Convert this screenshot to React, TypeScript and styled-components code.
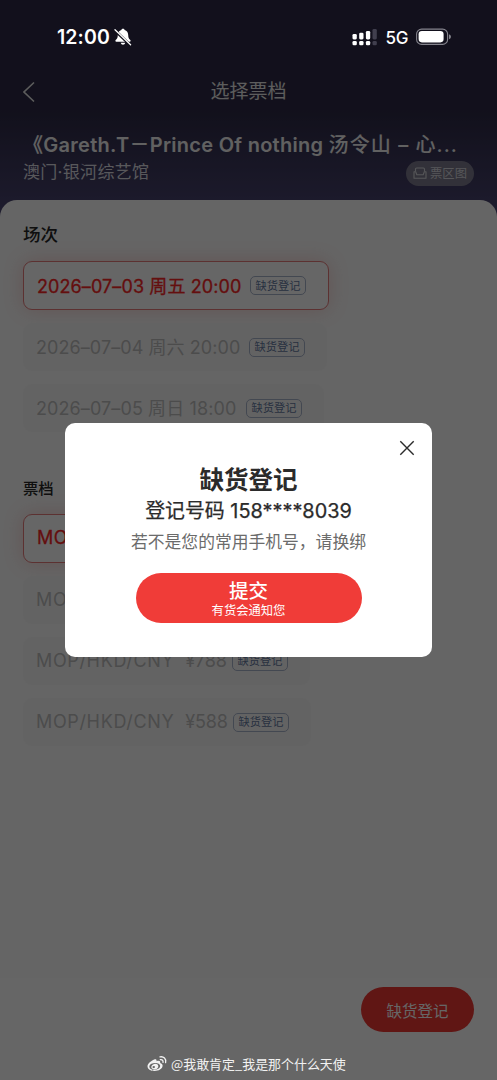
import React from 'react';
import styled, { createGlobalStyle } from 'styled-components';

const Global = createGlobalStyle`
  * { box-sizing: border-box; }
  html, body { margin: 0; padding: 0; }
  body {
    width: 497px;
    height: 1080px;
    overflow: hidden;
    font-family: Inter, 'Noto Sans CJK SC', sans-serif;
  }
  button { font: inherit; border: 0; padding: 0; background: none; }
`;

const Screen = styled.div`
  position: relative;
  width: 497px;
  height: 1080px;
  overflow: hidden;
  display: flex;
  flex-direction: column;
  background: linear-gradient(#2d2a46 0, #2d2a46 110px, #494470 210px);
`;

const Header = styled.header`
  height: 200px;
  flex: none;
  padding: 70px 23px 0;
  color: #fff;
`;

const NavBar = styled.nav`
  display: grid;
  grid-template-columns: 40px 1fr 40px;
  grid-template-rows: 44px;
  align-items: center;
  height: 44px;
  svg { display: block; }
`;

const NavTitle = styled.h1`
  margin: 0;
  text-align: center;
  font-size: 19px;
  font-weight: 400;
  line-height: 46px;
  color: #e8e8e8;
`;

const EventTitle = styled.div`
  margin-top: 16px;
  height: 30px;
  line-height: 30px;
  font-size: 20px;
  font-weight: 600;
  letter-spacing: 0.27px;
  white-space: nowrap;
  color: #f2f2f2;
`;

const TitleTail = styled.span`
  font-weight: 500;
  letter-spacing: 1.05px;
`;

const VenueRow = styled.div`
  display: flex;
  justify-content: space-between;
  height: 26px;
`;

const Venue = styled.span`
  font-size: 17px;
  line-height: 24px;
  letter-spacing: 0.3px;
  color: #dcdce4;
`;

const MapButton = styled.button`
  display: flex;
  align-items: center;
  justify-content: center;
  gap: 3px;
  width: 68px;
  height: 25px;
  margin-top: 1px;
  border-radius: 13px;
  background: #7d7c8e;
  color: #d8d8de;
  font-size: 12.3px;
  line-height: 25px;
`;

const Sheet = styled.main`
  flex: 1;
  display: flex;
  flex-direction: column;
  align-items: flex-start;
  padding: 20px 23px 0;
  border-radius: 17px 17px 0 0;
  background: #fcfcfc;
`;

const SectionTitle = styled.h2<{ $size: number; $weight: number }>`
  margin: 0;
  height: 28px;
  line-height: 29px;
  font-size: ${(p) => p.$size}px;
  font-weight: ${(p) => p.$weight};
  color: #262626;
`;

const Options = styled.div<{ $top: number; $bottom: number }>`
  display: flex;
  flex-direction: column;
  align-items: flex-start;
  gap: 13px;
  margin: ${(p) => p.$top}px 0 ${(p) => p.$bottom}px;
`;

const Option = styled.div<{ $active?: boolean; $width: number }>`
  display: flex;
  align-items: center;
  justify-content: space-between;
  width: ${(p) => p.$width}px;
  height: ${(p) => (p.$active ? 49 : 48)}px;
  padding: 0 22px 0 13px;
  border: ${(p) => (p.$active ? '1px solid #e57c7c' : '0')};
  border-radius: 9px;
  background: ${(p) => (p.$active ? '#fff' : '#f8f8f8')};
  box-shadow: ${(p) => (p.$active ? '0 0 20px rgba(239, 60, 55, .22)' : 'none')};
  color: ${(p) => (p.$active ? '#fb2626' : '#bebebe')};
  font-size: 18px;
  font-weight: 400;
  -webkit-text-stroke: ${(p) => (p.$active ? '0.3px currentColor' : '0')};
  white-space: pre;
`;

const OptionText = styled.span<{ $spacing: number }>`
  margin-top: -2px;
  letter-spacing: ${(p) => p.$spacing}px;
`;

const Price = styled.span`
  letter-spacing: -0.2px;
  margin-left: 11px;
`;

const Tag = styled.span`
  flex: none;
  display: flex;
  align-items: center;
  justify-content: center;
  width: 56px;
  height: 19px;
  border: 1px solid #a9b4cb;
  border-radius: 5px;
  color: #64799f;
  font-size: 11.2px;
  line-height: 18px;
  -webkit-text-stroke: 0;
`;

const Footer = styled.footer`
  flex: none;
  display: flex;
  justify-content: flex-end;
  height: 102px;
  padding: 9px 23px 0;
  background: #fff;
`;

const RegisterButton = styled.button`
  width: 113px;
  height: 45px;
  padding-top: 1px;
  border-radius: 23px;
  background: #ef3732;
  color: #fff;
  font-size: 15.5px;
`;

const Scrim = styled.div`
  position: absolute;
  inset: 0;
  background: rgba(0, 0, 0, 0.6);
`;

const StatusBar = styled.div`
  position: absolute;
  top: 24px;
  left: 57px;
  right: 45px;
  height: 26px;
  display: flex;
  align-items: center;
  color: #fff;
`;

const Clock = styled.span`
  font-size: 19.5px;
  font-weight: 600;
  line-height: 26px;
  letter-spacing: 0.1px;
  margin-right: 4px;
`;

const Network = styled.span`
  font-size: 17px;
  font-weight: 500;
  letter-spacing: -0.4px;
  padding-top: 1px;
  margin: 0 8px 0 9px;
`;

const Spacer = styled.span`
  flex: 1;
`;

const Dialog = styled.section`
  position: absolute;
  left: 65px;
  top: 423px;
  width: 367px;
  height: 234px;
  border-radius: 10px;
  background: #fff;
  display: flex;
  flex-direction: column;
  align-items: center;
  color: #2b2b2b;
`;

const CloseRow = styled.div`
  width: 100%;
  height: 39px;
  flex: none;
  display: flex;
  justify-content: flex-end;
  padding: 17px 17px 0 0;
`;

const DialogTitle = styled.h3`
  margin: 0;
  height: 35px;
  line-height: 36px;
  font-size: 24.5px;
  font-weight: 700;
`;

const PhoneLine = styled.div`
  height: 28px;
  line-height: 28px;
  font-size: 19.9px;
  font-weight: 400;
  -webkit-text-stroke: 0.25px currentColor;
  white-space: nowrap;
`;

const Hint = styled.div`
  height: 32px;
  line-height: 34px;
  font-size: 16.8px;
  color: #6b6b6b;
  white-space: nowrap;
`;

const Submit = styled.button`
  display: flex;
  flex-direction: column;
  align-items: center;
  width: 226px;
  height: 50px;
  margin-top: 16px;
  padding-top: 5px;
  border-radius: 25px;
  background: #f03c38;
  color: #fff;
`;

const SubmitLabel = styled.span`
  font-size: 19.5px;
  font-weight: 500;
  line-height: 26px;
`;

const SubmitNote = styled.span`
  font-size: 12.3px;
  line-height: 14px;
`;

const Watermark = styled.div`
  position: absolute;
  left: 147px;
  top: 1054px;
  height: 20px;
  display: flex;
  align-items: center;
  gap: 4px;
  color: #f2f2f2;
  font-size: 12.95px;
  line-height: 20px;
  white-space: nowrap;
  font-family: 'Noto Sans CJK SC', sans-serif;
`;

type Item = { text: string; price?: string; width: number; spacing: number; active?: boolean };

const sessions: Item[] = [
  { text: '2026–07–03 周五 20:00', width: 306, spacing: 0.1, active: true },
  { text: '2026–07–04 周六 20:00', width: 304, spacing: 0.07 },
  { text: '2026–07–05 周日 18:00', width: 301, spacing: 0.1 },
];

const tickets: Item[] = [
  { text: 'MOP/HKD/CNY', price: '¥1288', width: 306, spacing: 0.5, active: true },
  { text: 'MOP/HKD/CNY', price: '¥988', width: 287, spacing: 0.65 },
  { text: 'MOP/HKD/CNY', price: '¥788', width: 287, spacing: 0.65 },
  { text: 'MOP/HKD/CNY', price: '¥588', width: 288, spacing: 0.65 },
];

const BackIcon = () => (
  <svg width="14" height="22" viewBox="0 0 14 22" fill="none" stroke="#e6e6e6" strokeWidth="1.6">
    <path d="M11 1.5 1 11l10 9.5" />
  </svg>
);

const SeatIcon = () => (
  <svg width="14" height="13" viewBox="0 0 14 13" fill="none" stroke="currentColor" strokeWidth="1.1">
    <path d="M2.500 4.500V2.200Q2.500 1 3.700 1h6.600q1.200 0 1.200 1.200v2.300" />
    <path d="M1 4.800h1.700l1.100 2.900h6.400l1.100-2.900H13v6.500H1z" strokeLinejoin="round" />
  </svg>
);

const BellOff = () => (
  <svg width="18" height="18" viewBox="0 0 18 18">
    <path d="M9 .8c-.9 0-1.500.5-1.600 1.200C5 2.700 3.900 4.500 3.800 7 3.700 9.600 3.300 10.700 1.700 12.100c-.6.6-.4 1.600.6 1.600h13.400c1 0 1.200-1 .6-1.600-1.600-1.400-2-2.500-2.100-5.100-.1-2.500-1.200-4.300-3.600-5C10.500 1.300 9.900.8 9 .8zM6.700 14.800c.3 1.200 1.200 1.900 2.300 1.900s2-.7 2.300-1.900z" fill="#fff" />
    <path d="M.6 2.100 16.400 17.200" stroke="#12111c" strokeWidth="2.800" />
    <path d="M1 1.800 16.600 16.700" stroke="#fff" strokeWidth="1.300" strokeLinecap="round" />
  </svg>
);

const Signal = () => (
  <svg width="26" height="18" viewBox="0 0 26 18" fill="#fff">
    <rect x="1.500" y="6" width="4.300" height="5.400" rx="1.300" />
    <rect x="8.200" y="4.700" width="4.300" height="6.700" rx="1.300" />
    <rect x="14.900" y="2.900" width="4.300" height="8.500" rx="1.300" />
    <rect x="21.500" y="1" width="4.300" height="10.400" rx="1.300" fill="#413f4e" />
    <rect x="1.500" y="13" width="4.300" height="4.300" rx="1.300" />
    <rect x="8.200" y="13" width="4.300" height="4.300" rx="1.300" />
    <rect x="14.900" y="13" width="4.300" height="4.300" rx="1.300" />
    <rect x="21.500" y="13" width="4.300" height="4.300" rx="1.300" fill="#413f4e" />
  </svg>
);

const Battery = () => (
  <svg width="36" height="18" viewBox="0 0 36 18">
    <rect x=".6" y="1.100" width="31" height="15.300" rx="5" fill="none" stroke="#85848d" strokeWidth="1.100" />
    <rect x="2.600" y="3.100" width="25" height="11.300" rx="3.300" fill="#fff" />
    <path d="M33 6.300q2 .6 2 2.500t-2 2.500z" fill="#85848d" />
  </svg>
);

const Close = () => (
  <svg width="16" height="16" viewBox="0 0 16 16" stroke="#2b2b2b" strokeWidth="1.400">
    <path d="m1.300 1.300 13.400 13.400M14.700 1.300 1.300 14.700" />
  </svg>
);

const Weibo = () => (
  <svg width="20" height="18" viewBox="0 0 20 18" fill="none">
    <path
      fillRule="evenodd"
      fill="#f2f2f2"
      d="M7.200 4.500c1.500-.6 2.700-.2 2.300 1.700 2.300-.9 4.200-.5 3.700 1.700 1.400.4 2.500 1.300 2.400 2.900-.2 3.200-4 5.200-8 5.200S.500 14.200.500 11.300C.500 8.700 4.300 5.600 7.200 4.500zM7.500 8c-3.100.2-5.300 1.900-5.100 3.900.1 1.900 2.600 3.100 5.600 2.900 3.100-.3 5.300-2 5.200-4C13 8.900 10.500 7.700 7.500 8z"
    />
    <path fillRule="evenodd" fill="#f2f2f2" d="M7.300 8.900c2-.4 3.800.5 4 2.200.2 1.600-1.200 3-3.100 3.300-2 .3-3.700-.7-3.900-2.200-.1-1.500 1.100-2.900 3-3.300zM6.600 11c-.7.100-1.200.7-1.100 1.300s.7 1 1.400.8c.7-.1 1.200-.7 1.100-1.300S7.200 10.900 6.600 11z" />
    <path d="M13.300 4.700c1.900-.4 3.100.9 2.700 2.700M13 1.900c3.600-.8 6.500 2 5.600 5.700" stroke="#f2f2f2" strokeWidth="1.300" strokeLinecap="round" />
  </svg>
);

const OptionList = ({ items, top, bottom }: { items: Item[]; top: number; bottom: number }) => (
  <Options $top={top} $bottom={bottom}>
    {items.map((item) => (
      <Option key={item.text + item.price} $active={item.active} $width={item.width}>
        <OptionText $spacing={item.spacing}>
          {item.text}
          {item.price && <Price>{item.price}</Price>}
        </OptionText>
        <Tag>缺货登记</Tag>
      </Option>
    ))}
  </Options>
);

export default function App() {
  return (
    <>
      <Global />
      <Screen>
        <Header>
          <NavBar>
            <BackIcon />
            <NavTitle>选择票档</NavTitle>
          </NavBar>
          <EventTitle>
            《Gareth.T－Prince Of nothing <TitleTail>汤令山 – 心...</TitleTail>
          </EventTitle>
          <VenueRow>
            <Venue>澳门·银河综艺馆</Venue>
            <MapButton>
              <SeatIcon />
              票区图
            </MapButton>
          </VenueRow>
        </Header>
        <Sheet>
          <SectionTitle $size={17.5} $weight={500}>场次</SectionTitle>
          <OptionList items={sessions} top={13} bottom={42} />
          <SectionTitle $size={15.3} $weight={500}>票档</SectionTitle>
          <OptionList items={tickets} top={12} bottom={0} />
        </Sheet>
        <Footer>
          <RegisterButton>缺货登记</RegisterButton>
        </Footer>
        <Scrim />
        <StatusBar>
          <Clock>12:00</Clock>
          <BellOff />
          <Spacer />
          <Signal />
          <Network>5G</Network>
          <Battery />
        </StatusBar>
        <Dialog>
          <CloseRow>
            <Close />
          </CloseRow>
          <DialogTitle>缺货登记</DialogTitle>
          <PhoneLine>登记号码 158****8039</PhoneLine>
          <Hint>若不是您的常用手机号，请换绑</Hint>
          <Submit>
            <SubmitLabel>提交</SubmitLabel>
            <SubmitNote>有货会通知您</SubmitNote>
          </Submit>
        </Dialog>
        <Watermark>
          <Weibo />
          @我敢肯定_我是那个什么天使
        </Watermark>
      </Screen>
    </>
  );
}
